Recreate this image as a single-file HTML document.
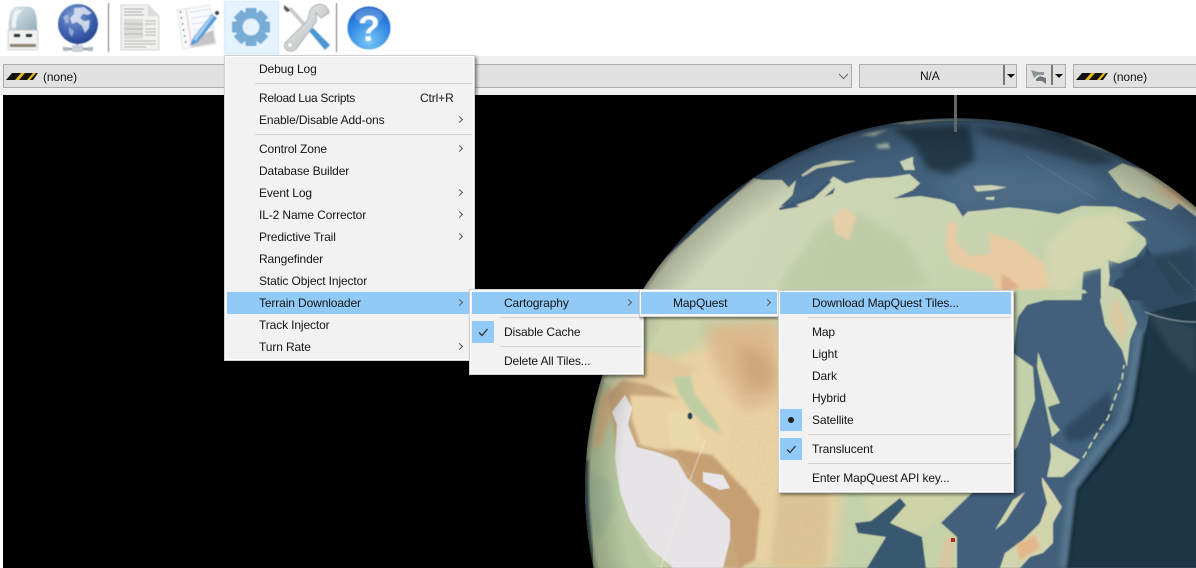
<!DOCTYPE html>
<html><head><meta charset="utf-8">
<style>
html,body{margin:0;padding:0;background:#fff;width:1196px;height:568px;overflow:hidden}
body{font:12px "Liberation Sans",sans-serif;color:#111;position:relative}
.a{position:absolute}
.combo{position:absolute;top:64px;height:22px;background:#e1e1e1;border:1px solid #adadad}
.menu{position:absolute;background:#f2f2f2;border:1px solid #cfcfcf;box-shadow:2px 2px 3px rgba(0,0,0,.45);outline:1px solid #fff;outline-offset:-2px}
.t{position:absolute;white-space:nowrap;line-height:14px;height:14px;color:#151515;letter-spacing:-.12px;filter:blur(.25px)}
.sep{position:absolute;height:1px;background:#d2d2d2}
.hl{position:absolute;background:#91c9f7;height:22px}
.arr{position:absolute;width:4px;height:4px;border-top:1px solid #555;border-right:1px solid #555;transform:rotate(45deg)}
</style></head><body>
<div class="a" style="left:0;top:56px;width:1196px;height:39px;background:#f0f0f0"></div>

<svg class="a" style="left:0;top:0;filter:blur(.4px)" width="400" height="56" viewBox="0 0 400 56">
<defs>
<linearGradient id="usb" x1="0" y1="0" x2="1" y2="1"><stop offset="0" stop-color="#e6edf0"/><stop offset=".55" stop-color="#b4c8d2"/><stop offset="1" stop-color="#8fa9b8"/></linearGradient>
<radialGradient id="gb" cx=".4" cy=".3" r=".8"><stop offset="0" stop-color="#7f9bd2"/><stop offset=".6" stop-color="#3d60ad"/><stop offset="1" stop-color="#1f3a86"/></radialGradient>
<radialGradient id="hp" cx=".5" cy=".8" r=".85"><stop offset="0" stop-color="#7cc8f7"/><stop offset=".6" stop-color="#2f86e2"/><stop offset="1" stop-color="#1b57c0"/></radialGradient>
<linearGradient id="wr" x1="0" y1="0" x2="1" y2="1"><stop offset="0" stop-color="#f2f4f5"/><stop offset="1" stop-color="#b0b5b8"/></linearGradient>
</defs>
<!-- USB -->
<path d="M9 32 C9 12 12 7 18 7 H28 C34 7 37 12 37 32 Z" fill="url(#usb)" stroke="#b6c4cc" stroke-width=".6"/>
<path d="M12 28 C12 14 14 10 19 10 H24 C18 12 16 18 16 28 Z" fill="#eef3f5"/>
<rect x="8" y="30" width="30" height="20" rx="1.500" fill="#f0f1f1" stroke="#b5b5b5" stroke-width=".5"/>
<rect x="14" y="34" width="6" height="3" fill="#333"/><rect x="26" y="34" width="6" height="3" fill="#333"/>
<rect x="10" y="44" width="26" height="3" fill="#8c8270"/>
<!-- globe -->
<path d="M77 44V49M64 49H92" stroke="#9aa4aa" stroke-width="2.500" fill="none"/>
<rect x="72" y="45" width="11" height="7" rx="1" fill="#c9d2d6"/>
<rect x="63" y="47" width="5" height="4" fill="#aeb8bc"/><rect x="88" y="47" width="5" height="4" fill="#aeb8bc"/>
<circle cx="78" cy="24" r="20" fill="url(#gb)"/>
<path d="M74 8 L84 7 L92 13 L88 15 L83 14 L80 18 L84 21 L90 20 L89 28 L85 33 L82 26 L77 22 L72 24 L70 18 L74 14Z" fill="#dfe6f2" opacity=".85"/>
<path d="M63 17 L68 14 L69 22 L66 24Z M69 27 L74 31 L72 37 L69 33Z" fill="#cfd9ee" opacity=".55"/>
<!-- sep -->
<rect x="108" y="3" width="1" height="49" fill="#777"/>
<!-- document -->
<path d="M121 5 H148 L159 16 V50 H121 Z" fill="#f1f1ef" stroke="#c9c9c7" stroke-width=".8"/>
<path d="M148 5 V16 H159 Z" fill="#dcdcda"/>
<path d="M124 9h20M124 12h18M124 15h20" stroke="#aaa"/>
<rect x="124" y="19" width="19" height="20" fill="#dcdcda"/>
<path d="M124 24h19M124 29h19M124 34h19" stroke="#b5b5b5"/>
<path d="M145 21h11M145 24h11M145 29h11M145 32h11M145 35h11M124 41h32M124 44h32M124 47h22" stroke="#b5b5b5"/>
<!-- notepad -->
<path d="M177 10 L210 5 L216 44 L183 49 Z" fill="#f8f9fb" stroke="#dcdcdc" stroke-width=".7"/>
<path d="M186 9 L192 48" stroke="#eec4c4"/>
<path d="M190 12L212 9M191 18L213 15M192 24L214 21M193 30L215 27" stroke="#d8e0ec"/>
<path d="M180 12l1 0M181 18l1 0M182 24l1 0M183 30l1 0M184 36l1 0M185 42l1 0" stroke="#444" stroke-width="1.600"/>
<path d="M196 38 L213 30 L215 43 L192 47 Z" fill="#c6c6c6"/>
<path d="M190 46 L193 38 L212 14 L217 18 L198 42 Z" fill="#5a9cd8"/>
<path d="M193 39 L212 15 L214 16 L196 41 Z" fill="#a6cfef"/>
<circle cx="217" cy="13" r="2" fill="#444"/>
<!-- gear tile -->
<rect x="224.500" y="1.500" width="54" height="52" fill="#e5f3ff" stroke="#cce8ff"/>
<g fill="#78acd5">
<rect x="245.500" y="8" width="11" height="38" rx="1"/>
<rect x="245.500" y="8" width="11" height="38" rx="1" transform="rotate(45 251 27)"/>
<rect x="245.500" y="8" width="11" height="38" rx="1" transform="rotate(90 251 27)"/>
<rect x="245.500" y="8" width="11" height="38" rx="1" transform="rotate(135 251 27)"/>
<circle cx="251" cy="27" r="15.500"/>
</g>
<circle cx="251" cy="27" r="8.500" fill="#e5f3ff"/>
<!-- tools -->
<path d="M288 9 L291 7 L312 30 L309 33 Z" fill="#c8ccce"/>
<path d="M284 5 L288 8 L290 11 L287 12 L284 9 Z" fill="#555"/>
<path d="M309 31 L313 28 L330 45 L325 50 Z" fill="#4b97d2"/>
<path d="M316 5 C323 2 329 8 329 13 L321 18 L316 13 C316 18 318 21 314 25 L296 49 C291 54 282 50 285 43 L306 22 C311 16 307 9 316 5 Z" fill="url(#wr)" stroke="#a3a8ab" stroke-width=".8"/>
<circle cx="290" cy="45" r="2.500" fill="#fff" stroke="#999" stroke-width=".5"/>
<!-- sep -->
<rect x="336" y="3" width="1" height="49" fill="#777"/>
<!-- help -->
<circle cx="369" cy="28" r="21.500" fill="url(#hp)"/>
<ellipse cx="369" cy="16" rx="14" ry="8" fill="#fff" opacity=".2"/>
<text x="369" y="41" text-anchor="middle" font-family="Liberation Sans" font-weight="bold" font-size="36" fill="#fff">?</text>
</svg>

<!-- combos -->
<div class="combo" style="left:3px;width:480px"></div>
<div class="combo" style="left:470px;width:380px"></div>
<div class="combo" style="left:859px;width:156px"></div>
<div class="combo" style="left:1026px;width:38px"></div>
<div class="combo" style="left:1073px;width:130px"></div>
<svg class="a" style="left:0;top:60px" width="1196" height="32" viewBox="0 60 1196 32">
<defs><g id="hz"><path d="M6 80 L12 73 H38 L33 80 Z" fill="#111"/><path d="M15 80 L21 73 H25 L19 80 Z M27 80 L33 73 H36 L30 80Z" fill="#e5b61e"/></g></defs>
<use href="#hz" x="0"/><use href="#hz" x="1070"/>
<path d="M839 74 L843.500 78.500 L848 74" fill="none" stroke="#666"/>
<rect x="1003" y="65" width="2" height="20" fill="#777"/>
<path d="M1007 74 H1015 L1011 78 Z" fill="#111"/>
<rect x="1051" y="65" width="2" height="20" fill="#777"/>
<path d="M1055 74 H1063 L1059 78 Z" fill="#111"/>
<path d="M1031 70 L1038 72 L1044 72 L1044 75 L1038 75 L1034 78 Z" fill="#8d9599"/>
<path d="M1040 76 L1046 78 L1046 84 L1042 81 L1036 81 L1036 79 Z" fill="#6f777b"/>
</svg>
<div class="t" style="left:43px;top:70px">(none)</div>
<div class="t" style="left:920px;top:69px">N/A</div>
<div class="t" style="left:1113px;top:70px">(none)</div>

<!-- 3D view -->
<svg class="a" style="left:3px;top:95px" width="1193" height="473" viewBox="3 95 1193 473">
<defs>
<clipPath id="gc"><circle cx="955" cy="488" r="370"/></clipPath>
<radialGradient id="vg" gradientUnits="userSpaceOnUse" cx="955" cy="488" r="370"><stop offset=".9" stop-color="#000" stop-opacity="0"/><stop offset=".985" stop-color="#000" stop-opacity=".18"/><stop offset="1" stop-color="#000" stop-opacity=".45"/></radialGradient>
<linearGradient id="land" gradientUnits="userSpaceOnUse" x1="300" y1="300" x2="1300" y2="600"><stop offset="0" stop-color="#cfd6b8"/><stop offset="1" stop-color="#c4d2ab"/></linearGradient>
<filter id="b05"><feGaussianBlur stdDeviation=".6"/></filter>
<filter id="b1"><feGaussianBlur stdDeviation="1.200"/></filter>
<filter id="b3"><feGaussianBlur stdDeviation="3"/></filter>
<filter id="b6"><feGaussianBlur stdDeviation="7"/></filter>
<filter id="g2"><feGaussianBlur stdDeviation="4"/></filter>
<filter id="g3"><feGaussianBlur stdDeviation="10"/></filter>
<filter id="g4"><feGaussianBlur stdDeviation="20"/></filter>
<filter id="nz" x="0" y="0" width="100%" height="100%"><feTurbulence type="fractalNoise" baseFrequency=".35" numOctaves="2" seed="4"/><feColorMatrix values="0 0 0 0 .55  0 0 0 0 .42  0 0 0 0 .25  0 0 0 1.600 -.72"/></filter>
</defs>
<rect x="3" y="95" width="1193" height="473" fill="#000"/>
<g clip-path="url(#gc)">
<g filter="url(#b05)">
<rect x="580" y="100" width="620" height="470" fill="#42617b"/>
<!-- deep pacific -->
<path d="M1120 270 L1196 245 V320 L1146 312 L1135 292Z" fill="#2f4a60" filter="url(#b3)"/>
<path d="M1145 333 L1135 400 L1130 423 L1100 463 L1078 490 L1068 568 H1200 V300 L1150 312 Z" fill="#1f3546"/>
<path d="M1145 333 L1135 400 L1130 423 L1100 463 L1078 490 L1068 568" fill="none" stroke="#10202c" stroke-width="3" filter="url(#b1)"/>
<path d="M1140 330 L1128 400 L1120 425 L1090 460 L1072 490 L1063 568" fill="none" stroke="#6a8aa0" stroke-width="7" opacity=".6" filter="url(#b3)"/>
<path d="M1146 310 L1180 322 L1196 328 V375 L1170 350 Z" fill="#2d4658" filter="url(#b3)"/>
<path d="M1145 312 Q1170 322 1196 322" fill="none" stroke="#b9c7c8" stroke-width="1.200" opacity=".65"/>
<path d="M1063 430 L1110 390 L1112 420 L1085 440 L1068 442 Z" fill="#2f4a61" filter="url(#b3)"/>
<!-- arctic deep -->
<g transform="translate(640,100) scale(.3546,.3333)">
<path d="M710 85 L930 75 L945 180 L880 230 L810 205 L770 130 Z" fill="#24394a" filter="url(#g3)"/>
<path d="M940 80 L1200 95 L1345 185 L1280 195 L1120 150 L980 110 Z" fill="#2a4256" filter="url(#g3)"/>
<path d="M1000 200 L1270 230 L1300 290 L1160 340 L920 340 L830 250 L930 205Z" fill="#4d6b85" filter="url(#g4)"/>
<path d="M1400 470 L1568 460 V585 H1360 Z" fill="#2c4558" filter="url(#g3)"/>
<!-- rim land -->
<path d="M700 70 Q890 45 1100 75 L1040 68 Q890 52 760 72 Z" fill="#9eaa98"/>
<path d="M620 105 L700 88 L660 108Z M665 135 L700 128 L705 145 L670 145Z" fill="#a7b6aa" filter="url(#g2)"/>
<path d="M1200 110 L1330 160 L1280 130Z" fill="#8ea199" filter="url(#g2)"/>
<!-- main land -->
<path fill="url(#land)" d="M-60 600 L320 235 L345 240 L400 240 L420 262 L440 240 L430 285 L395 320 L450 310 L480 290 L520 258 L545 230 L580 250 L640 235 L700 232 L760 222 L790 250 L770 270 L715 296 L790 288 L850 298 L888 312 L910 350 L925 335 L975 330 L1040 322 L1100 328 L1180 342 L1245 318 L1340 320 L1400 342 L1428 360 L1370 366 L1395 390 L1425 415 L1428 432 L1400 470 L1350 490 L1320 480 L1300 505 L1250 515 L1245 600 Z"/>
<path d="M455 225 L490 198 L545 182 L610 183 L560 195 L500 205 L460 230Z" fill="#c9d2b4"/>
<path d="M733 185 L770 170 L770 190 L775 210 L745 210 Z" fill="#c9d2b4"/>
<path d="M940 258 L990 255 L1035 262 L1000 270 L950 275Z M975 292 L1000 290 L998 300 L975 298Z" fill="#c9d2b4"/>
<path d="M390 325 L440 305 L475 290 L530 240 L540 245 L490 295 L440 315 L450 320 L395 330Z M520 290 L550 262 L545 280Z" fill="#3d5a75"/>
<!-- alaska -->
<path d="M1320 215 L1360 190 L1450 220 L1580 330 L1568 350 L1520 310 L1498 330 L1420 290 L1405 295 L1360 270 Z" fill="#c2cbab"/>
<path d="M1440 250 L1520 270 L1568 320 L1500 300Z" fill="#d8b48e" filter="url(#g3)"/>
<!-- siberian hills -->
<path d="M400 540 L510 370 L620 340 L750 420 L820 560 L600 585 L400 585 Z" fill="#b8c9a0" opacity=".6" filter="url(#g3)"/>
<path d="M545 350 L575 320 L610 350 L590 420 L550 400 Z" fill="#e5cfa8" filter="url(#g2)"/>
<path d="M870 370 L895 365 L890 420 L930 470 L990 460 L985 400 L1060 425 L1140 490 L1160 560 L1010 585 L990 530 L880 490 L860 430 Z" fill="#e8cba2" filter="url(#g2)"/>
<path d="M1150 430 L1240 350 L1340 340 L1400 400 L1350 480 L1250 520 L1200 585 L1150 560Z" fill="#d8d8b0" opacity=".8" filter="url(#g3)"/>
<path d="M1020 520 L1070 560 L1020 585Z" fill="#dcae88" filter="url(#g2)"/>
<path d="M1300 500 L1320 480 L1325 530 L1315 600 L1300 600Z" fill="#cdd6b3"/>
<path d="M1325 600 L1340 540 L1385 520 L1415 490 L1430 440 L1520 600Z" fill="#2f4a60"/>
<path d="M1390 380 L1440 430 M1490 485 L1568 570 M1090 170 L1290 300" stroke="#dfe4e2" stroke-width="1.500" stroke-dasharray="2 6" fill="none" opacity=".7"/>
<path d="M360 565 L560 325" stroke="#e9eee0" stroke-width="1.200" fill="none" stroke-dasharray="3 4" opacity=".7"/>
</g>
<!-- lower land -->
<path fill="#c3d1aa" d="M580 290 H1085 L1087 293 L1053 298 L1027 305 L1018 317 L1013 353 L1033 367 L1035 400 L1017 447 L973 492 L941 523 L957 537 L957 568 H580 Z"/>
<path fill="#c8d3ad" d="M1107 285 L1120 290 L1127 300 L1137 323 L1130 340 L1127 367 L1122 350 L1105 325 L1100 300Z"/>
<path fill="#dcc9a2" d="M1115 295 L1128 325 L1122 345 L1110 320Z" filter="url(#b1)"/>
<path fill="#c4d0a9" d="M1038 352 L1045 370 L1060 403 L1048 407 L1052 420 L1060 430 L1052 437 L1045 403 L1037 367Z"/>
<path fill="#ccd4b0" d="M1050 443 L1067 453 L1080 460 L1073 468 L1063 477 L1047 477 L1051 457Z"/>
<path d="M1083 458 L1098 432 L1108 418 L1116 395 L1122 380 L1124 365" fill="none" stroke="#c8d2b0" stroke-width="1.500" stroke-dasharray="7 4"/>
<!-- tan zone -->
<path fill="#e9d2a3" filter="url(#b6)" d="M610 385 L700 345 L780 330 L830 350 L835 400 L840 500 L835 568 L770 568 L720 570 L640 460 L615 420Z"/>
<path fill="#ccd3ab" filter="url(#b3)" d="M645 320 L700 318 L695 345 L665 352 L650 345Z"/>
<path fill="#dcb98c" filter="url(#b6)" d="M705 325 L778 320 L778 400 L745 410 L715 365Z"/>
<path fill="#cfa67a" filter="url(#b6)" d="M735 345 L770 355 L775 385 L748 390Z"/>
<path fill="#e2c89b" filter="url(#b3)" d="M620 360 L650 350 L700 370 L670 385 L630 385Z"/>
<path fill="#b7c9a0" d="M580 375 L610 385 L625 440 L617 470 L630 520 L650 560 L660 570 H580Z" filter="url(#b1)"/>
<path fill="#a9c09b" filter="url(#b3)" d="M590 470 L610 480 L615 510 L600 540 L590 530Z"/>
<path fill="#d4b386" filter="url(#b3)" d="M600 395 L612 385 L615 405 L600 445 L592 450Z"/>
<path fill="#ead8ab" filter="url(#b1)" d="M667 412 L690 410 L705 445 L700 450 L670 445Z"/>
<path fill="#bdcea3" filter="url(#b1)" d="M673 378 L690 375 L695 395 L715 420 L722 435 L705 425 L690 410 L680 395Z"/>
<path fill="#c7a67a" filter="url(#b1)" d="M622 380 L650 385 L680 400 L670 397 L630 395 L632 420 L640 445 L660 450 L680 450 L700 455 L720 478 L745 490 L748 515 L756 545 L740 568 L672 568 L645 540 L622 490 L612 420 L608 395Z"/>
<path fill="#c69f72" filter="url(#b1)" d="M675 450 L712 455 L745 490 L760 510 L755 560 L740 568 L725 510 L695 480Z"/>
<path fill="#e6e4e6" d="M625 395 L632 408 L628 425 L637 447 L660 453 L677 460 L687 478 L713 502 L730 520 L730 540 L723 568 L673 568 L650 548 L630 520 L620 492 L615 458 L617 425 L612 412Z"/>
<path fill="#e8e6e8" d="M703 472 L723 475 L730 488 L720 490 L703 482Z"/>
<ellipse cx="690" cy="416" rx="2.500" ry="3.500" fill="#1e3f55"/>
<path fill="#cfd4a8" filter="url(#b6)" d="M860 420 L990 400 L990 480 L930 530 L870 540Z"/>
<path fill="#dcc494" filter="url(#b3)" d="M778 490 L830 490 L825 568 L770 568Z"/>
<rect x="730" y="400" width="110" height="168" filter="url(#nz)" opacity=".22"/>
<!-- seas over land -->
<path fill="#395870" d="M855 523 L871 521 L900 498 L906 505 L890 523 L922 537 L926 568 H867 L886 537 L858 533Z"/>
<path fill="#42617b" d="M973 492 L1013 492 L1060 492 L1040 520 L1020 545 L1000 568 L957 568 L957 537 L941 523Z"/>
<path fill="#c5d2a9" d="M941 523 L957 537 L957 568 L926 568 L922 537Z"/>
<path fill="#d9c6a0" d="M945 535 L954 545 L950 568 L938 568Z" filter="url(#b1)"/>
<path fill="#d2d4ae" d="M1042 477 L1053 493 L1062 507 L1053 523 L1053 543 L1043 553 L1030 557 L1020 568 L1000 568 L1005 553 L1023 540 L1040 523 L1047 503 L1042 483Z"/>
<path fill="#e3b78b" d="M1016 545 L1035 535 L1040 548 L1020 560Z" filter="url(#b1)"/>
<path fill="#d0d5ad" d="M1013 500 L1025 492 L1005 522 L995 530Z"/>
<path d="M660 570 L690 480 L705 440" fill="none" stroke="#f1f1ea" stroke-width=".7" opacity=".8"/>
</g>
<rect x="951" y="538" width="4" height="4" fill="#c0281c"/>
<path d="M585 460 Q584 520 592 568" fill="none" stroke="#2f4a60" stroke-width="7" opacity=".8" filter="url(#b1)"/>
<rect x="580" y="100" width="620" height="470" fill="url(#vg)"/>
</g>
<rect x="954" y="95" width="3" height="37" fill="#626668"/>
</svg>

<!-- main menu -->
<div class="menu" style="left:224px;top:55px;width:249px;height:304px"></div>
<div class="sep" style="left:255px;top:83px;width:217px"></div>
<div class="sep" style="left:255px;top:134px;width:217px"></div>
<div class="hl" style="left:227px;top:292px;width:245px"></div>
<div class="t" style="left:259px;top:62px">Debug Log</div>
<div class="t" style="left:259px;top:91px;letter-spacing:-.3px">Reload Lua Scripts</div>
<div class="t" style="left:420px;top:91px">Ctrl+R</div>
<div class="t" style="left:259px;top:113px">Enable/Disable Add-ons</div>
<div class="t" style="left:259px;top:142px">Control Zone</div>
<div class="t" style="left:259px;top:164px">Database Builder</div>
<div class="t" style="left:259px;top:186px">Event Log</div>
<div class="t" style="left:259px;top:208px">IL-2 Name Corrector</div>
<div class="t" style="left:259px;top:230px">Predictive Trail</div>
<div class="t" style="left:259px;top:252px">Rangefinder</div>
<div class="t" style="left:259px;top:274px">Static Object Injector</div>
<div class="t" style="left:259px;top:296px">Terrain Downloader</div>
<div class="t" style="left:259px;top:318px">Track Injector</div>
<div class="t" style="left:259px;top:340px">Turn Rate</div>
<i class="arr" style="left:457px;top:117px"></i>
<i class="arr" style="left:457px;top:146px"></i>
<i class="arr" style="left:457px;top:190px"></i>
<i class="arr" style="left:457px;top:212px"></i>
<i class="arr" style="left:457px;top:234px"></i>
<i class="arr" style="left:457px;top:300px"></i>
<i class="arr" style="left:457px;top:344px"></i>

<!-- submenu Terrain -->
<div class="menu" style="left:469px;top:289px;width:173px;height:84px"></div>
<div class="hl" style="left:472px;top:292px;width:168px"></div>
<div class="sep" style="left:500px;top:317px;width:141px"></div>
<div class="sep" style="left:500px;top:346px;width:141px"></div>
<div class="a" style="left:472px;top:321px;width:22px;height:22px;background:#91c9f7"></div>
<svg class="a" style="left:472px;top:321px" width="22" height="22"><path d="M7 11.500 L10 14.500 L15.500 8" fill="none" stroke="#333" stroke-width="1.300"/></svg>
<div class="t" style="left:504px;top:296px">Cartography</div>
<div class="t" style="left:504px;top:325px">Disable Cache</div>
<div class="t" style="left:504px;top:354px">Delete All Tiles...</div>
<i class="arr" style="left:626px;top:300px"></i>

<!-- submenu Cartography -->
<div class="menu" style="left:639px;top:289px;width:138px;height:26px;box-shadow:1px 2px 2px rgba(0,0,0,.4)"></div>
<div class="hl" style="left:641px;top:292px;width:136px"></div>
<div class="t" style="left:673px;top:296px">MapQuest</div>
<i class="arr" style="left:765px;top:300px"></i>

<!-- submenu MapQuest -->
<div class="menu" style="left:778px;top:290px;width:234px;height:201px"></div>
<div class="hl" style="left:780px;top:292px;width:231px"></div>
<div class="sep" style="left:808px;top:317px;width:203px"></div>
<div class="sep" style="left:808px;top:434px;width:203px"></div>
<div class="sep" style="left:808px;top:463px;width:203px"></div>
<div class="a" style="left:780px;top:409px;width:22px;height:22px;background:#91c9f7"></div>
<div class="a" style="left:780px;top:438px;width:22px;height:22px;background:#91c9f7"></div>
<div class="a" style="left:788px;top:417px;width:6px;height:6px;border-radius:50%;background:#222"></div>
<svg class="a" style="left:780px;top:438px" width="22" height="22"><path d="M7 11.500 L10 14.500 L15.500 8" fill="none" stroke="#333" stroke-width="1.300"/></svg>
<div class="t" style="left:812px;top:296px">Download MapQuest Tiles...</div>
<div class="t" style="left:812px;top:325px">Map</div>
<div class="t" style="left:812px;top:347px">Light</div>
<div class="t" style="left:812px;top:369px">Dark</div>
<div class="t" style="left:812px;top:391px">Hybrid</div>
<div class="t" style="left:812px;top:413px">Satellite</div>
<div class="t" style="left:812px;top:442px">Translucent</div>
<div class="t" style="left:812px;top:471px">Enter MapQuest API key...</div>
</body></html>
